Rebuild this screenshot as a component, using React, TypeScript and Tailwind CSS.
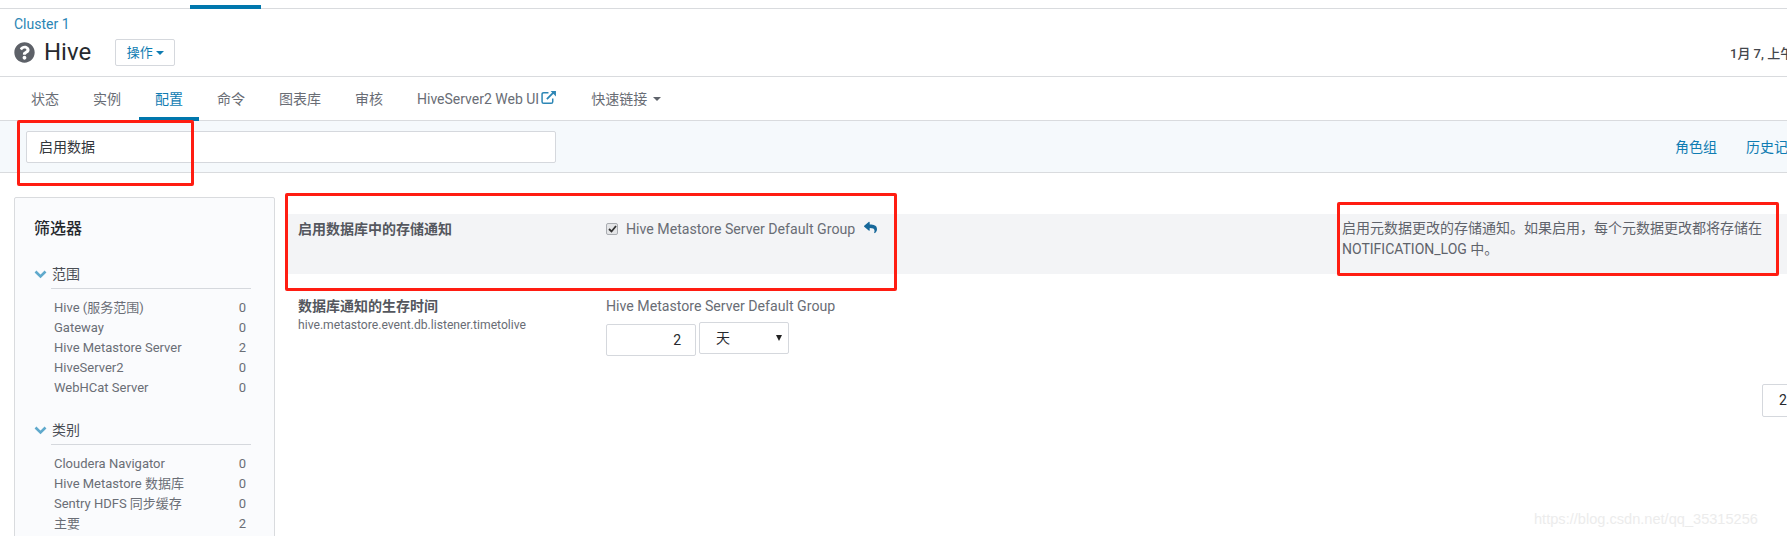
import React from "react";
import { FaQuestionCircle, FaReply } from "react-icons/fa";

const font = { fontFamily: '"Roboto","Noto Sans CJK SC",sans-serif' };

function Caret({ color }: { color: string }) {
  return <span className={"inline-block w-0 h-0 border-x-[4px] border-x-transparent border-t-[4px] " + color} />;
}

function Chevron() {
  return (
    <svg width="13" height="9" viewBox="0 0 13 9" className="shrink-0">
      <path d="M1.5 1.5 L6.5 6.5 L11.5 1.5" fill="none" stroke="#5fa9cc" strokeWidth="2.6" />
    </svg>
  );
}

function ExternalLink() {
  return (
    <svg width="16" height="15" viewBox="0 0 15 14" className="mt-[1px] shrink-0" fill="none" stroke="#2c86b5">
      <path d="M7 2.5 H2.5 Q1 2.5 1 4 V11 Q1 12.5 2.5 12.5 H9.5 Q11 12.5 11 11 V8" strokeWidth="1.4" />
      <path d="M5.5 8.5 L12.5 1.5" strokeWidth="1.7" />
      <path d="M9 1 H14 V6 Z" fill="#2c86b5" stroke="none" />
    </svg>
  );
}

function FilterGroup({ title, rows, className = "" }: { title: string; rows: [string, number][]; className?: string }) {
  return (
    <div className={className}>
      <div className="flex items-center gap-[5px] h-[24px]">
        <Chevron />
        <span className="text-[14px] text-[#4a4e55]">{title}</span>
      </div>
      <div className="ml-[17px] mt-[2px] border-t border-[#d5d8dd] w-[200px] pt-[9px]">
        {rows.map(([n, c]) => (
          <div key={n} className="flex justify-between h-[20px] leading-[20px] text-[13px] text-[#6a6e76] pl-[3px] pr-[5px]">
            <span>{n}</span>
            <span>{c}</span>
          </div>
        ))}
      </div>
    </div>
  );
}

const tabs = ["状态", "实例", "配置", "命令", "图表库", "审核"];

export default function App() {
  return (
    <div style={font} className="relative w-[1787px] h-[536px] overflow-hidden bg-white text-[13px] text-[#5f636b]">
      {/* top line */}
      <div className="h-[9px] border-b border-[#d9dbde] relative">
        <div className="absolute left-[190px] top-[5px] w-[71px] h-[4px] bg-[#0077ad]" />
      </div>

      {/* header */}
      <div className="h-[68px] border-b border-[#d9dbde] pl-[14px] pt-[7px] relative">
        <div className="text-[14px] leading-[16px] text-[#2c86b5]">Cluster 1</div>
        <div className="flex items-center mt-[7px] h-[27px]">
          <FaQuestionCircle className="text-[#5d6168] text-[21px]" />
          <span className="ml-[9px] text-[24px] leading-[27px] text-[#26292e]">Hive</span>
          <button className="ml-[24px] w-[60px] h-[27px] border border-[#d5d8dd] rounded-[2px] text-[13px] text-[#0f7cb2] flex items-center justify-center gap-[3px]">
            操作 <Caret color="border-t-[#0f7cb2]" />
          </button>
        </div>
        <div className="absolute left-[1730px] top-[35px] text-[13px] font-medium text-[#43464c] whitespace-nowrap">1月 7, 上午 10:00</div>
      </div>

      {/* tabs */}
      <div className="h-[44px] border-b border-[#d9dbde] flex gap-[2px] pl-[15px] text-[14px] text-[#696d75]">
        {tabs.map((t) => (
          <div
            key={t}
            className={
              "px-[16px] h-[44px] pt-[12px] leading-[20px] " +
              (t === "配置" ? "text-[#0f7cb2] border-b-[4px] border-[#0077ad]" : "")
            }
          >
            {t}
          </div>
        ))}
        <div className="px-[16px] pt-[12px] leading-[20px] flex items-start gap-[2px] h-[44px]">
          HiveServer2 Web UI
          <ExternalLink />
        </div>
        <div className="px-[16px] pt-[12px] leading-[20px] flex items-start gap-[6px] h-[44px]">
          快速链接
          <span className="mt-[8px] flex"><Caret color="border-t-[#5f636b]" /></span>
        </div>
      </div>

      {/* search band */}
      <div className="h-[52px] bg-[#f5f9fc] border-b border-[#d9dbde] flex items-start pl-[26px] pt-[10px] relative">
        <div className="w-[530px] h-[32px] bg-white border border-[#d5d8dd] rounded-[2px] pl-[12px] leading-[30px] text-[14px] text-[#33363b]">启用数据</div>
        <div className="ml-auto flex gap-[29px] mr-[-15px] pt-[6px] text-[14px] text-[#0f7cb2] whitespace-nowrap">
          <span>角色组</span>
          <span>历史记录</span>
        </div>
      </div>

      {/* content */}
      <div className="flex pl-[14px] pt-[24px]">
        <div className="w-[261px] shrink-0 h-[400px] bg-[#fafbfd] border border-[#d9dbde] rounded-[2px] pl-[19px] pt-[20px]">
          <div className="text-[16px] leading-[22px] text-[#26292e] font-medium">筛选器</div>
          <FilterGroup
            className="mt-[22px]"
            title="范围"
            rows={[
              ["Hive (服务范围)", 0],
              ["Gateway", 0],
              ["Hive Metastore Server", 2],
              ["HiveServer2", 0],
              ["WebHCat Server", 0],
            ]}
          />
          <FilterGroup
            className="mt-[20px]"
            title="类别"
            rows={[
              ["Cloudera Navigator", 0],
              ["Hive Metastore 数据库", 0],
              ["Sentry HDFS 同步缓存", 0],
              ["主要", 2],
            ]}
          />
        </div>

        <div className="flex-1 ml-[11px] pt-[17px]">
          {/* row 1 */}
          <div className="flex h-[60px] bg-[#f3f4f6]">
            <div className="w-[320px] pl-[12px] pt-[5px] leading-[20px] font-bold text-[14px] text-[#54575e]">启用数据库中的存储通知</div>
            <div className="w-[736px] pt-[5px] leading-[20px] flex items-start text-[14.15px] text-[#696d75]">
              <span className="mt-[4px] w-[12px] h-[12px] bg-[#e4e5e7] border border-[#a9acb1] rounded-[2px] flex items-center justify-center">
                <svg width="9" height="8" viewBox="0 0 9 8"><path d="M1 4 L3.5 6.5 L8 1" fill="none" stroke="#333" strokeWidth="1.8" /></svg>
              </span>
              <span className="ml-[8px]">Hive Metastore Server Default Group</span>
              <FaReply className="ml-[9px] mt-[2px] text-[#17689a] text-[13px]" />
            </div>
            <div className="pt-[4px] w-[425px] leading-[21px] text-[14px] text-[#5f636b]">
              启用元数据更改的存储通知。如果启用，每个元数据更改都将存储在 NOTIFICATION_LOG 中。
            </div>
          </div>
          {/* row 2 */}
          <div className="flex pt-[22px]">
            <div className="w-[320px] pl-[12px]">
              <div className="leading-[20px] font-bold text-[14px] text-[#54575e]">数据库通知的生存时间</div>
              <div className="leading-[16px] mt-[1px] text-[12.15px] text-[#696d75]">hive.metastore.event.db.listener.timetolive</div>
            </div>
            <div>
              <div className="leading-[20px] text-[14.15px] text-[#696d75]">Hive Metastore Server Default Group</div>
              <div className="flex items-start gap-[3px] mt-[6px]">
                <div className="w-[90px] h-[32px] mt-[2px] border border-[#d5d8dd] rounded-[2px] text-right pr-[14px] leading-[30px] text-[14px] text-[#26292e]">2</div>
                <div className="w-[90px] h-[32px] border border-[#d5d8dd] rounded-[2px] flex items-center justify-between pl-[16px] pr-[6px] text-[14px] text-[#26292e]">
                  天
                  <span className="inline-block w-0 h-0 border-x-[3px] border-x-transparent border-t-[6px] border-t-[#222]" />
                </div>
              </div>
            </div>
            <div className="ml-auto mt-[88px] mr-[-30px] w-[55px] h-[33px] border border-[#d5d8dd] rounded-[2px] pl-[16px] leading-[30px] text-[14px] text-[#26292e]">2</div>
          </div>
        </div>
      </div>

      {/* annotations */}
      <div className="absolute left-[17px] top-[120px] w-[177px] h-[66px] border-[3px] border-[#ff1d12] rounded-[2px]" />
      <div className="absolute left-[285px] top-[193px] w-[612px] h-[98px] border-[3px] border-[#ff1d12] rounded-[2px]" />
      <div className="absolute left-[1337px] top-[202px] w-[442px] h-[74px] border-[3px] border-[#ff1d12] rounded-[2px]" />

      {/* watermark */}
      <div className="absolute left-[1534px] top-[510px] text-[14.6px] leading-[18px] text-[#ececec] whitespace-nowrap" style={{ fontFamily: '"Liberation Sans",sans-serif' }}>
        https://blog.csdn.net/qq_35315256
      </div>
    </div>
  );
}
